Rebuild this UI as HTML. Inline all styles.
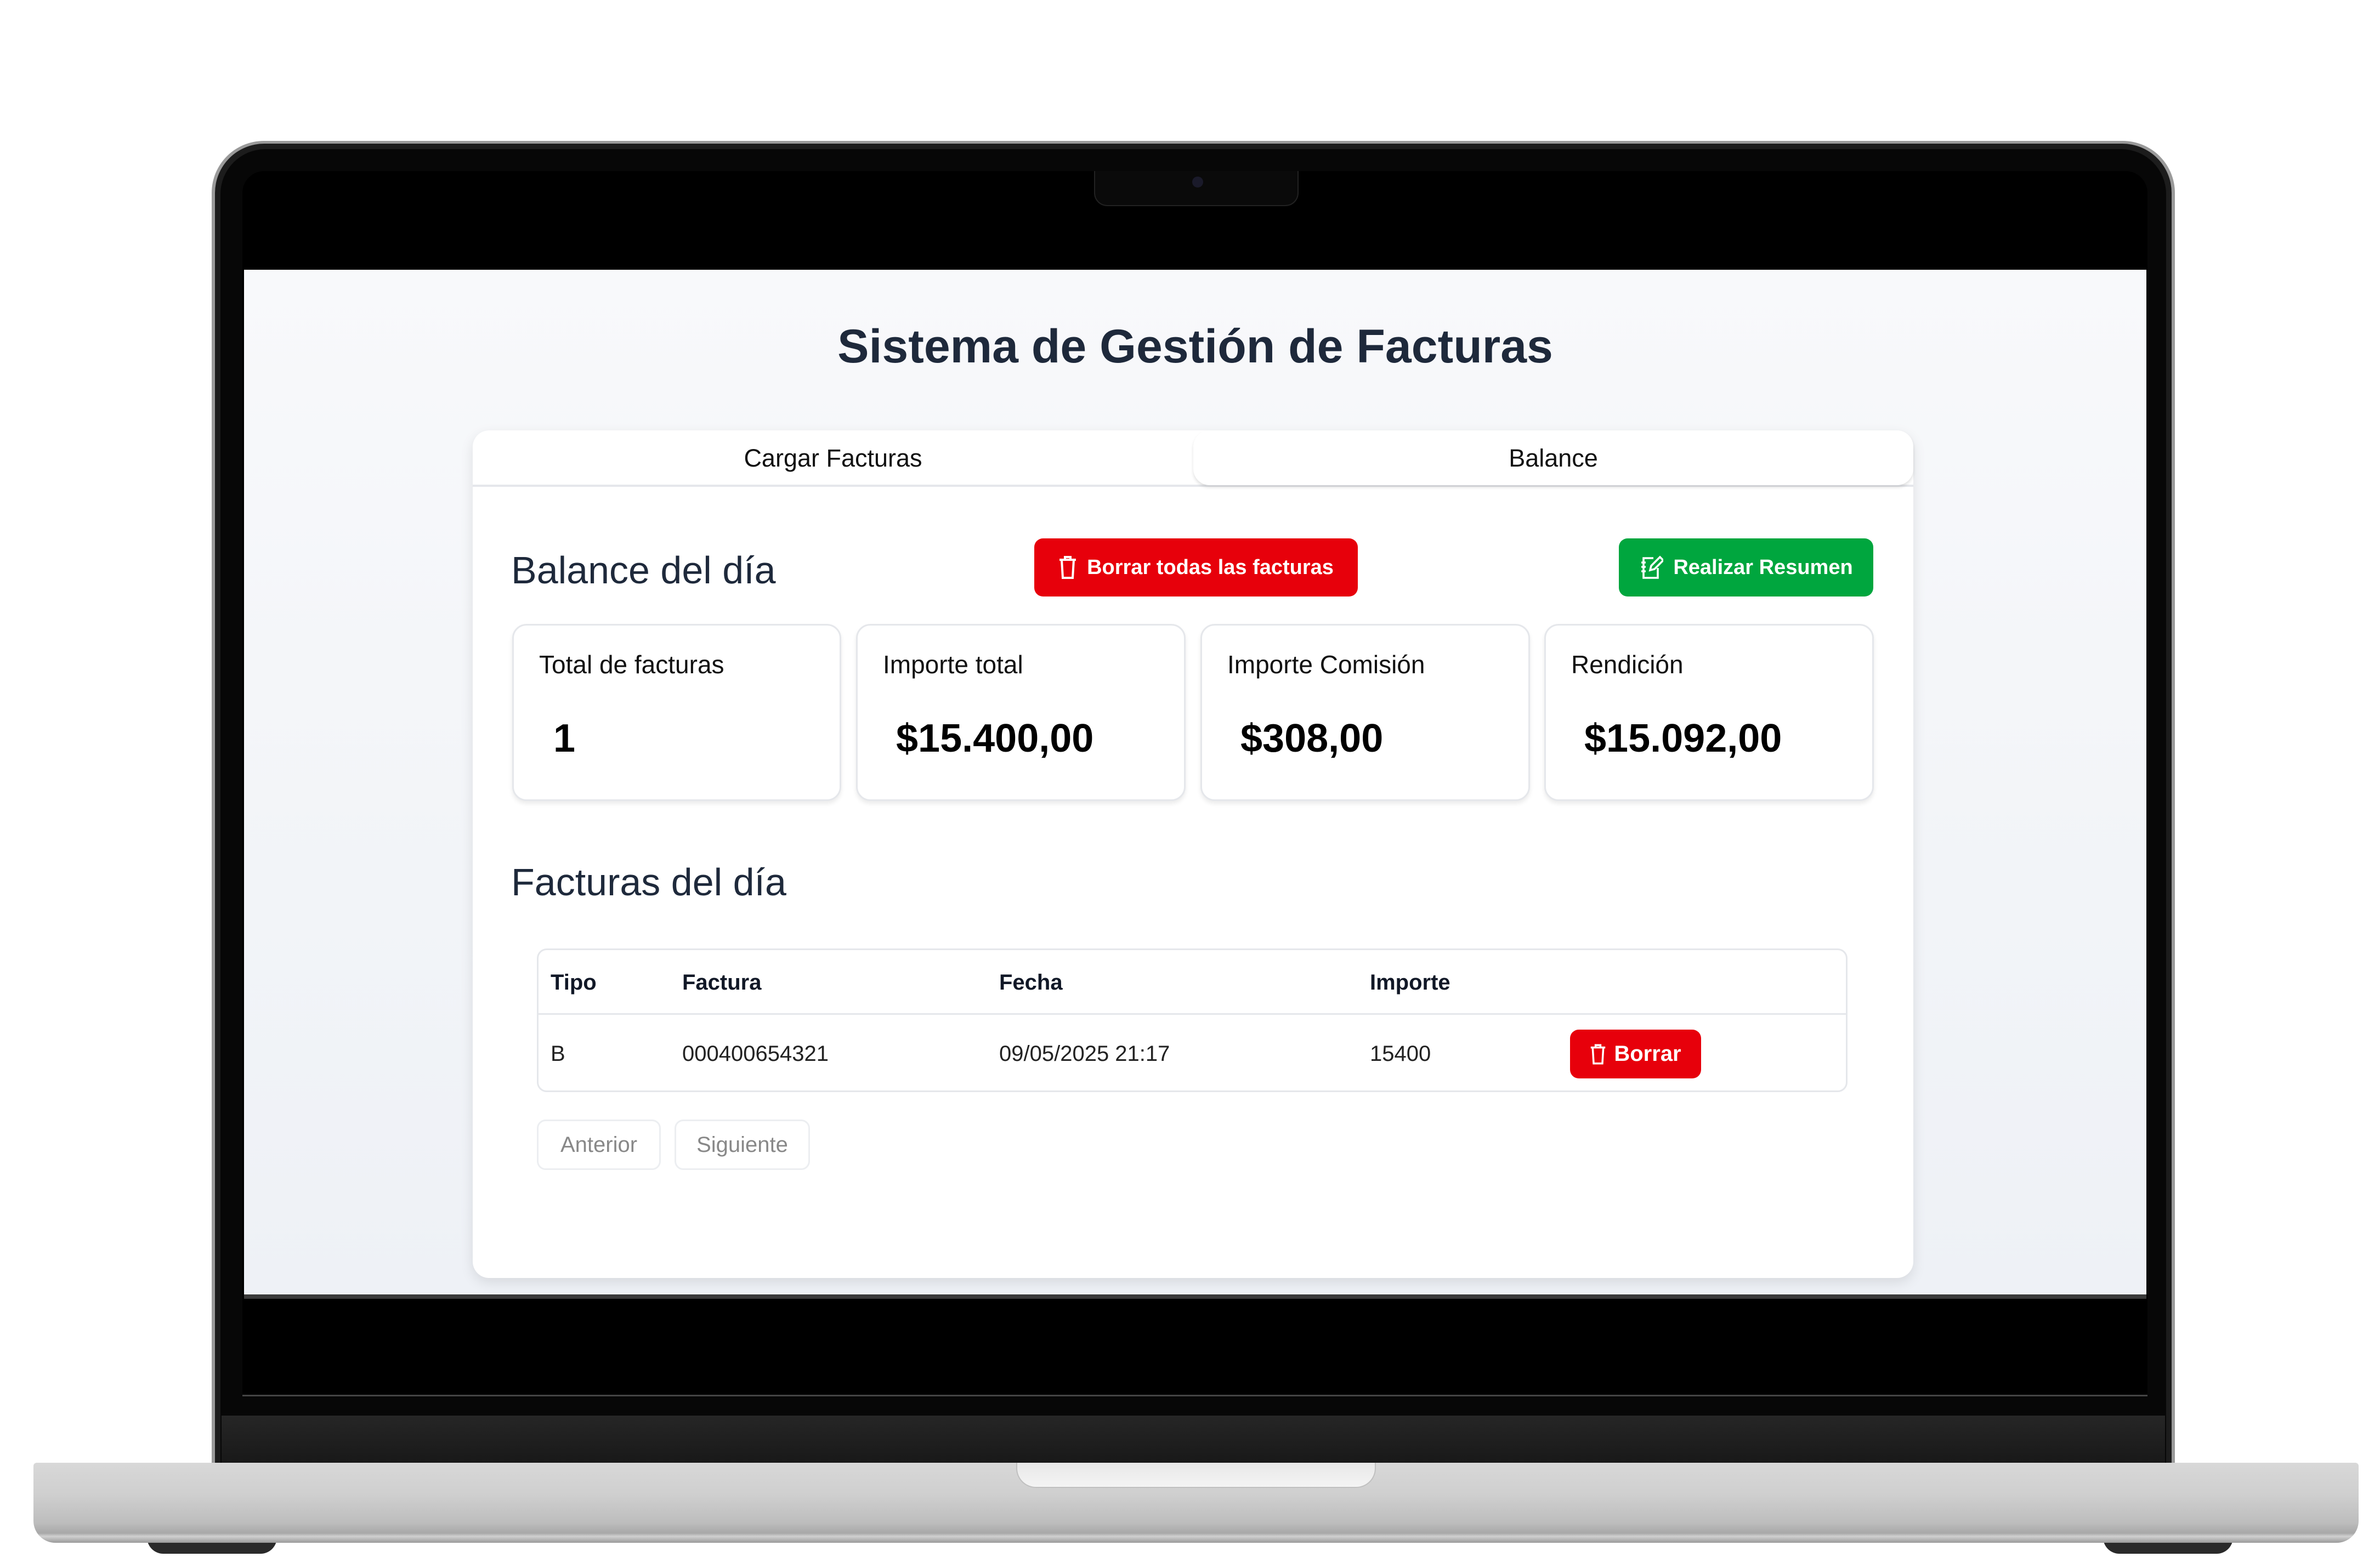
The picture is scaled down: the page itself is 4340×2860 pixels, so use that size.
<!DOCTYPE html>
<html><head><meta charset="utf-8"><style>
*{box-sizing:border-box;margin:0;padding:0}
body{width:4340px;height:2860px;background:#fff;position:relative;overflow:hidden;font-family:"Liberation Sans",sans-serif;color:#111827}
.a{position:absolute}
.btn{position:absolute;border-radius:16px;color:#fff;font-weight:bold;font-size:38px;display:flex;align-items:center;justify-content:center;gap:18px}
.stat{position:absolute;top:1138px;height:323px;background:#fff;border:3px solid #e5e7eb;border-radius:26px;box-shadow:0 5px 8px rgba(0,0,0,.08)}
.stat .l{position:absolute;left:46px;top:44px;font-size:46px;color:#111}
.stat .v{position:absolute;left:70px;top:165px;font-size:72px;font-weight:bold;color:#000}
.th{position:absolute;top:1770px;font-size:40px;font-weight:bold}
.td{position:absolute;top:1900px;font-size:40px;color:#222}
</style></head><body>
<div class="a" style="left:386px;top:257px;width:3580px;height:2420px;border-radius:95px 95px 0 0;background:#9a9a9a"></div>
<div class="a" style="left:392px;top:262px;width:3568px;height:2420px;border-radius:90px 90px 0 0;background:#1c1c1c"></div>
<div class="a" style="left:402px;top:272px;width:3548px;height:2420px;border-radius:82px 82px 0 0;background:#070707"></div>
<div class="a" style="left:442px;top:312px;width:3474px;height:2235px;border-radius:40px 40px 0 0;background:#000;border-bottom:3px solid #444"></div>
<div class="a" style="left:404px;top:2582px;width:3544px;height:90px;background:linear-gradient(#262626,#181818)"></div>
<div class="a" style="left:1995px;top:312px;width:373px;height:64px;border-radius:0 0 24px 24px;background:#0a0a0a;border:2px solid #222;border-top:none"></div>
<div class="a" style="left:2174px;top:322px;width:20px;height:20px;border-radius:50%;background:#1a1a2a"></div>
<div class="a" style="left:445px;top:492px;width:3469px;height:1869px;background:linear-gradient(#f8f9fb,#eef1f6)"></div>
<div class="a" style="left:445px;top:2361px;width:3469px;height:8px;background:#3a3a3a"></div>
<div class="a" style="left:268px;top:2790px;width:237px;height:44px;border-radius:0 0 30px 30px;background:#2a2a2a"></div>
<div class="a" style="left:3835px;top:2790px;width:237px;height:44px;border-radius:0 0 30px 30px;background:#2a2a2a"></div>
<div class="a" style="left:61px;top:2668px;width:4240px;height:146px;border-radius:6px 6px 40px 40px;background:linear-gradient(#d8d8d8,#cfcfcf 40%,#bdbdbd 75%,#a8a8a8 88%,#d0d0d0 92%,#9a9a9a)"></div>
<div class="a" style="left:1853px;top:2668px;width:656px;height:46px;border-radius:0 0 36px 36px;background:linear-gradient(#e8e8e8,#f4f4f4);border:2px solid #c0c0c0;border-top:none"></div>
<div class="a" style="left:445px;top:583px;width:3469px;text-align:center;font-size:86px;font-weight:bold;color:#1e293b">Sistema de Gestión de Facturas</div>
<div class="a" style="left:862px;top:785px;width:2627px;height:1546px;background:#fff;border-radius:30px;box-shadow:0 8px 24px rgba(0,0,0,.10)"></div>
<div class="a" style="left:862px;top:884px;width:2627px;height:4px;background:#e5e7eb"></div>
<div class="a" style="left:862px;top:810px;width:1314px;text-align:center;font-size:45px;color:#111">Cargar Facturas</div>
<div class="a" style="left:2176px;top:785px;width:1313px;height:100px;background:#fff;border-radius:30px;box-shadow:0 4px 6px rgba(0,0,0,.12)"></div>
<div class="a" style="left:2176px;top:810px;width:1313px;text-align:center;font-size:45px;color:#111">Balance</div>
<div class="a" style="left:932px;top:1000px;font-size:70px;color:#1e293b">Balance del día</div>
<div class="btn" style="left:1886px;top:982px;width:590px;height:106px;background:#e7000b">
<svg width="34" height="44" viewBox="0 0 17 22" fill="none" stroke="#fff" stroke-width="2"><path d="M1 4h15M6 4V1.5h5V4M3 4l1 16.5h9L14 4"/></svg><span>Borrar todas las facturas</span></div>
<div class="btn" style="left:2952px;top:982px;width:464px;height:106px;background:#00a63e">
<svg width="44" height="46" viewBox="0 0 22 23" fill="none" stroke="#fff" stroke-width="1.8"><path d="M13 3H4v18h13v-9"/><path d="M10 14l1-4 8-8 3 3-8 8z"/><path d="M2 7h4M2 11h4M2 15h4"/></svg><span>Realizar Resumen</span></div>
<div class="stat" style="left:934px;width:600px"><div class="l">Total de facturas</div><div class="v" style="left:72px">1</div></div>
<div class="stat" style="left:1561px;width:601px"><div class="l">Importe total</div><div class="v">$15.400,00</div></div>
<div class="stat" style="left:2189px;width:601px"><div class="l">Importe Comisión</div><div class="v">$308,00</div></div>
<div class="stat" style="left:2816px;width:601px"><div class="l">Rendición</div><div class="v">$15.092,00</div></div>
<div class="a" style="left:932px;top:1569px;font-size:70px;color:#1e293b">Facturas del día</div>
<div class="a" style="left:979px;top:1730px;width:2390px;height:262px;border:3px solid #e5e7eb;border-radius:18px"></div>
<div class="a" style="left:979px;top:1848px;width:2390px;height:3px;background:#e5e7eb"></div>
<div class="th" style="left:1004px">Tipo</div>
<div class="th" style="left:1244px">Factura</div>
<div class="th" style="left:1822px">Fecha</div>
<div class="th" style="left:2498px">Importe</div>
<div class="td" style="left:1004px">B</div>
<div class="td" style="left:1244px">000400654321</div>
<div class="td" style="left:1822px">09/05/2025 21:17</div>
<div class="td" style="left:2498px">15400</div>
<div class="btn" style="left:2863px;top:1878px;width:239px;height:89px;background:#e7000b;font-size:40px;gap:14px">
<svg width="30" height="40" viewBox="0 0 17 22" fill="none" stroke="#fff" stroke-width="2"><path d="M1 4h15M6 4V1.5h5V4M3 4l1 16.5h9L14 4"/></svg><span>Borrar</span></div>
<div class="a" style="left:979px;top:2042px;width:226px;height:92px;border:3px solid #eceef1;border-radius:16px;font-size:40px;color:#888;display:flex;align-items:center;justify-content:center">Anterior</div>
<div class="a" style="left:1230px;top:2042px;width:247px;height:92px;border:3px solid #eceef1;border-radius:16px;font-size:40px;color:#888;display:flex;align-items:center;justify-content:center">Siguiente</div>
</body></html>
